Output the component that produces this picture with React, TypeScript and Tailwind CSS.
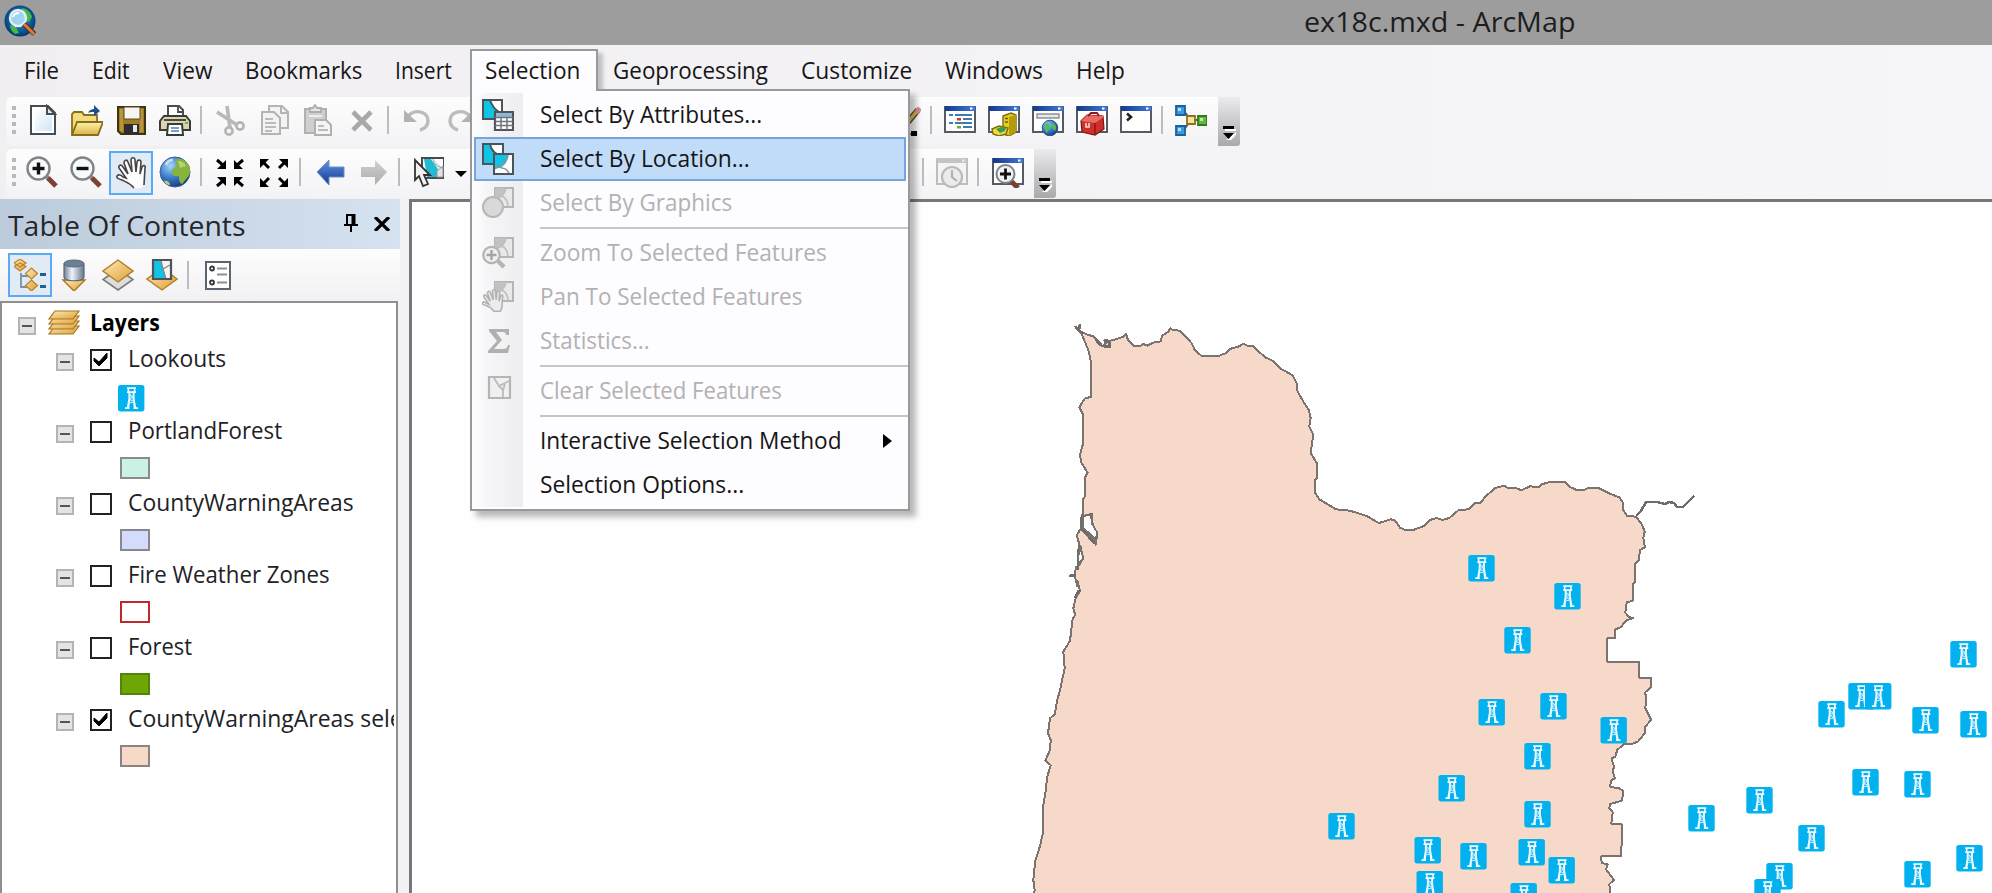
import { useLayoutEffect, useRef, useState, type ReactNode } from "react";

function Label({ w, children, className = "" }: { w: number; children: string; className?: string }) {
  const ref = useRef<HTMLSpanElement>(null);
  const [scale, setScale] = useState(1);
  useLayoutEffect(() => {
    if (ref.current) setScale(w / ref.current.offsetWidth);
  }, [w, children]);
  return (
    <span className={`block shrink-0 whitespace-nowrap ${className}`} style={{ width: w }}>
      <span ref={ref} className="inline-block origin-left" style={{ transform: `scaleX(${scale})` }}>
        {children}
      </span>
    </span>
  );
}

function Icon({ children, size = 32 }: { children: ReactNode; size?: number }) {
  return (
    <svg width={size} height={size} viewBox="0 0 32 32" fill="none" className="block shrink-0">
      {children}
    </svg>
  );
}

/* ---------- shared gradients ---------- */
function Defs() {
  return (
    <svg width="0" height="0" className="absolute">
      <defs>
        <linearGradient id="gold" x1="0" y1="0" x2="1" y2="1">
          <stop offset="0" stopColor="#fdebb8" />
          <stop offset="1" stopColor="#dd9f35" />
        </linearGradient>
        <linearGradient id="folder" x1="0" y1="0" x2="0" y2="1">
          <stop offset="0" stopColor="#fdf3a8" />
          <stop offset="1" stopColor="#d9b54a" />
        </linearGradient>
        <linearGradient id="steel" x1="0" y1="0" x2="1" y2="0">
          <stop offset="0" stopColor="#6f7f95" />
          <stop offset="0.4" stopColor="#eef4fb" />
          <stop offset="1" stopColor="#66758b" />
        </linearGradient>
        <linearGradient id="bluearrow" x1="0" y1="0" x2="0" y2="1">
          <stop offset="0" stopColor="#5f93e6" />
          <stop offset="1" stopColor="#12378f" />
        </linearGradient>
        <linearGradient id="grayarrow" x1="0" y1="0" x2="0" y2="1">
          <stop offset="0" stopColor="#d2d2d2" />
          <stop offset="1" stopColor="#ababab" />
        </linearGradient>
        <radialGradient id="ocean" cx="0.35" cy="0.3" r="0.75">
          <stop offset="0" stopColor="#a9d4f7" />
          <stop offset="0.5" stopColor="#3f80cd" />
          <stop offset="1" stopColor="#143a7c" />
        </radialGradient>
        <radialGradient id="deep" cx="0.5" cy="0.45" r="0.6">
          <stop offset="0" stopColor="#2ea0d8" />
          <stop offset="0.6" stopColor="#0d5c9c" />
          <stop offset="1" stopColor="#052c5e" />
        </radialGradient>
        <linearGradient id="page" x1="0" y1="0" x2="1" y2="1">
          <stop offset="0" stopColor="#ffffff" />
          <stop offset="1" stopColor="#cfe6f8" />
        </linearGradient>
        <linearGradient id="caption" x1="0" y1="0" x2="1" y2="0">
          <stop offset="0" stopColor="#16398c" />
          <stop offset="1" stopColor="#3f78d6" />
        </linearGradient>
        <g id="tower">
          <rect width="26.4" height="26.4" rx="2.6" fill="#03b1ef" />
          <path d="M9 2.2h9v1.8H9zM9 6.2h9v1.8H9zM9.6 4h1.6v2.2H9.6zM15.8 4h1.6v2.2h-1.6zM10.4 8h2v5.4l-1.300 10h-2.400l1.700-10zM14.6 8h2v5.400l1.700 10h-2.400l-1.300-10z" fill="#f2fbff" />
          <path d="M11.2 13l4.6 0M11 9l5 4M10.6 13.5l5.6 3.5M10.2 18l6.6-1" stroke="#c9eeff" strokeWidth="1.2" />
          <path d="M7 22.2h4.400v1.8H7zM15.600 22.2h4.400v1.8h-4.400z" fill="#f2fbff" />
        </g>
      </defs>
    </svg>
  );
}

/* ---------- icons ---------- */
const AppIcon = () => (
  <Icon>
    <circle cx="16" cy="16" r="15.5" fill="url(#deep)" />
    <path d="M18 3c6 1 9 5 10 9l-3 5-4-2 1-4-4-2zM6 20l6 2 3 6-4 1c-3-2-5-5-5-9z" fill="#45b649" />
    <circle cx="14" cy="13" r="8" fill="#a9dbf5" fillOpacity="0.92" stroke="#e6eef4" strokeWidth="2.4" />
    <path d="M9 12c1-3 4-4 6-4" stroke="#fff" strokeWidth="2" />
    <path d="M20 19l10.500 10" stroke="#5c2a10" strokeWidth="5" />
    <path d="M20 19l10 10" stroke="#d97a3c" strokeWidth="3" />
  </Icon>
);
const NewIcon = () => (
  <Icon>
    <path d="M4 2h17l7 7v21H4z" fill="#fff" stroke="#474b52" strokeWidth="2" />
    <path d="M8 6h11v6h6v15H8z" fill="url(#page)" />
    <path d="M20 2v8h8z" fill="#dfe5ec" stroke="#474b52" strokeWidth="2" />
  </Icon>
);
const OpenIcon = () => (
  <Icon>
    <path d="M1 30V10l2-2h8l2 3h13v7" fill="#f2dc7c" stroke="#8a6d1b" strokeWidth="1.8" />
    <path d="M1 31l5-13h26l-5 13z" fill="url(#folder)" stroke="#8a6d1b" strokeWidth="1.8" />
    <path d="M17 9c1-3 4-4 6-4V1l6 6-6 5V8c-3 0-5 0-6 1z" fill="#1f4f8f" />
  </Icon>
);
const SaveIcon = () => (
  <Icon>
    <path d="M3 3h27v27H6l-3-3z" fill="#a07c26" stroke="#3d3214" strokeWidth="2" />
    <path d="M5 5h3v22H5zM25 5h3v23h-3z" fill="#b8943c" />
    <path d="M9 3h16v12H9z" fill="#f5f5f2" stroke="#5b4c20" strokeWidth="1" />
    <path d="M9 20h15v10H9z" fill="#2d2d2d" />
    <path d="M18 21h4v7h-4z" fill="#e8e8e8" />
  </Icon>
);
const PrintIcon = () => (
  <Icon>
    <path d="M9 15V2h11l4 4v9" fill="#fff" stroke="#474b52" strokeWidth="2" />
    <path d="M19 2v6h6" stroke="#474b52" strokeWidth="1.800" />
    <path d="M5 12h22l4 5v9H1v-9z" fill="#d8d5b4" stroke="#3b3b36" strokeWidth="2" />
    <path d="M5 16h22" stroke="#4b4b44" strokeWidth="2" />
    <path d="M26 18h3v2h-3z" fill="#5ec038" />
    <path d="M9 20h14l1 11H8z" fill="#fff" stroke="#3b3b36" strokeWidth="2" />
    <path d="M12 24h8M12 27h8" stroke="#4a7fb8" strokeWidth="1.600" />
  </Icon>
);
const CutIcon = () => (
  <Icon>
    <path d="M3 8l20 13M13 2l3 22" stroke="#b9b9b9" strokeWidth="3.600" />
    <circle cx="15" cy="27" r="3.600" stroke="#b4b4b4" strokeWidth="2.600" />
    <circle cx="26" cy="22" r="3.600" stroke="#b4b4b4" strokeWidth="2.600" />
  </Icon>
);
const CopyIcon = () => (
  <Icon>
    <path d="M11 2h13l6 6v16H11z" fill="#f3f3f3" stroke="#b4b4b4" strokeWidth="2" />
    <path d="M23 2v7h7" stroke="#b4b4b4" strokeWidth="2" />
    <path d="M4 8h12l6 6v16H4z" fill="#f3f3f3" stroke="#b4b4b4" strokeWidth="2" />
    <path d="M7 15h8M7 19h11M7 23h11M7 27h7" stroke="#bbb" strokeWidth="1.800" />
  </Icon>
);
const PasteIcon = () => (
  <Icon>
    <path d="M3 5h21v24H3z" fill="#cfcfcf" stroke="#b0b0b0" strokeWidth="2" />
    <path d="M8 8V4h3l2-3 2 3h4v4z" fill="#e6e6e6" stroke="#adadad" strokeWidth="1.800" />
    <path d="M7 12h13" stroke="#eee" strokeWidth="2" />
    <path d="M13 16h11l5 5v10H13z" fill="#f5f5f5" stroke="#b0b0b0" strokeWidth="2" />
    <path d="M16 22h6M16 26h10" stroke="#bbb" strokeWidth="1.800" />
  </Icon>
);
const DeleteIcon = () => (
  <Icon>
    <path d="M7 8l18 18M25 8L7 26" stroke="#a8a8a8" strokeWidth="4.600" />
  </Icon>
);
const UndoIcon = () => (
  <Icon>
    <path d="M7 12c8-8 20-4 20 5 0 4-3 8-8 9" stroke="#bcbcbc" strokeWidth="3.400" />
    <path d="M3 6v12h13z" fill="#b2b2b2" />
  </Icon>
);
const RedoIcon = () => (
  <Icon>
    <path d="M25 12C17 4 5 8 5 17c0 4 3 8 8 9" stroke="#bcbcbc" strokeWidth="3.400" />
    <path d="M29 6v12H16z" fill="#b2b2b2" />
  </Icon>
);
const PencilIcon = () => (
  <Icon>
    <path d="M19 18L29 6" stroke="#5a4a2a" strokeWidth="6" />
    <path d="M19 18L28 7" stroke="#d8b65a" strokeWidth="3.500" />
    <path d="M27 9l4-5" stroke="#d98f8f" strokeWidth="5" />
    <path d="M22 27h6v6h-6z" fill="#000" />
    <path d="M17 30h5" stroke="#666" strokeWidth="1.500" />
  </Icon>
);

function WindowFrame({ gray = false }: { gray?: boolean }) {
  return (
    <>
      <path d="M1 3h30v25H1z" fill={gray ? "#f4f4f4" : "#fff"} stroke={gray ? "#bdbdbd" : "#565b63"} strokeWidth="2" />
      <path d="M1 2h30v5H1z" fill={gray ? "#c4c4c4" : "url(#caption)"} />
      <path d="M26 3.500h2.500v2H26z" fill={gray ? "#eee" : "#fff"} />
    </>
  );
}
const TocIcon = () => (
  <Icon>
    <WindowFrame />
    <path d="M5 10h4v2H5zM5 18h4v2H5z" fill="#3480c4" />
    <path d="M13 14h4v2.500h-4z" fill="#c93636" />
    <path d="M13 22h4v2.500h-4z" fill="#6fae2c" />
    <path d="M11 11h17M19 15h9M11 19h17M19 23h9" stroke="#3f7cad" strokeWidth="2" />
  </Icon>
);
const CatalogIcon = () => (
  <Icon>
    <WindowFrame />
    <path d="M15 12l8-3 5 2v17l-7 4-6-2z" fill="#e6cf1c" stroke="#7c6a0c" strokeWidth="1.400" />
    <path d="M21 13l7-2v17l-7 4z" fill="#b59b0e" />
    <path d="M17 14.500h3M17 18h3" stroke="#6a5a08" strokeWidth="1.600" />
    <path d="M4 25l7-3 9 2-2 6-7 2-6-2z" fill="#f0dd3c" stroke="#7c6a0c" strokeWidth="1.400" />
    <path d="M8 25l5-2 5 1-1 3-5 2z" fill="#3d9a5c" />
  </Icon>
);
const SearchIcon = () => (
  <Icon>
    <WindowFrame />
    <path d="M5 10h22v4H5z" fill="#e6e8ea" stroke="#8b9299" strokeWidth="1.400" />
    <circle cx="18" cy="24" r="7.800" fill="url(#ocean)" stroke="#2b5a86" strokeWidth="1" />
    <path d="M13 21c2-3 5-2 5 1s-2 4-3 7c-2-2-3-5-2-8zM20 19c4 1 5 5 3 8l-3-3z" fill="#55bd58" />
  </Icon>
);
const ToolboxIcon = () => (
  <Icon>
    <WindowFrame />
    <path d="M5 17l6-6 16 1 1 13-9 6-13-3z" fill="#cf2f2a" stroke="#7e1512" strokeWidth="1.200" />
    <path d="M5 17l14 2 9-6-1-1-16-1z" fill="#e96a60" />
    <path d="M19 19v12" stroke="#8f1916" strokeWidth="1.600" />
    <path d="M12 12l3-3h6l2 3" stroke="#8f1916" strokeWidth="1.800" />
    <path d="M10 19v4h3v-4" stroke="#f6d9d5" strokeWidth="1.600" />
  </Icon>
);
const PythonIcon = () => (
  <Icon>
    <WindowFrame />
    <path d="M7 9.500l4 3.500-4 3.500" stroke="#222" strokeWidth="2.600" />
  </Icon>
);
const ModelIcon = () => (
  <Icon>
    <path d="M9 7l6 8M9 26l6-9M18 16h6" stroke="#4b5664" strokeWidth="1.800" />
    <path d="M1 2h9v9H1zM1 22h9v9H1z" fill="#3c9be0" stroke="#1c5f9d" strokeWidth="1.800" />
    <path d="M3 4h3v3H3zM3 24h3v3H3z" fill="#b5e0fb" />
    <path d="M12 12h8v8h-8z" fill="#f7e39a" stroke="#8f6f1e" strokeWidth="1.800" />
    <path d="M23 12h9v9h-9z" fill="#63b83e" stroke="#2f7a1a" strokeWidth="1.800" />
    <path d="M25 14h3v3h-3z" fill="#bde8a5" />
  </Icon>
);

function Magnifier({ minus = false }: { minus?: boolean }) {
  return (
    <>
      <path d="M20 20l3 3" stroke="#8d8d8d" strokeWidth="4" />
      <path d="M22 22l8 8" stroke="#7c4130" strokeWidth="5" />
      <circle cx="12.500" cy="12.500" r="11" fill="#f7fafc" stroke="#808387" strokeWidth="2.400" />
      <path d="M6.500 12.500h12" stroke="#111" strokeWidth="3.400" />
      {!minus && <path d="M12.500 6.500v12" stroke="#111" strokeWidth="3.400" />}
    </>
  );
}
const ZoomInIcon = () => (
  <Icon>
    <Magnifier />
  </Icon>
);
const ZoomOutIcon = () => (
  <Icon>
    <Magnifier minus />
  </Icon>
);
const handPath =
  "M18 31C14 26 11 24 7 23 4 22 1 21 2 19c1-2 4-1 6 1l3 1L4 11c-1-3 2-4 4-1l5 7L9 6c0-3 3-4 4-1l4 10-1-12c0-3 4-3 4 0l1 12 1-10c1-3 4-2 4 0l-1 12 2-7c1-2 4-2 3 1l-1 15-2 5z";
const PanIcon = () => (
  <Icon>
    <path d={handPath} fill="#fdfdfd" />
    <path
      d="M19 31C15 26 11 25 7 23 4 22 1 21 2 19c1-2 4-1 6 1l3 1L4 11c-1-3 2-4 4-1l5 7L9 6c0-3 3-4 4-1l4 10-1-12c0-3 4-3 4 0l1 12 1-10c1-3 4-2 4 0l-1 12 2-7c1-2 4-2 3 1l-1 17"
      stroke="#454545"
      strokeWidth="1.600"
    />
  </Icon>
);
const GlobeIcon = () => (
  <Icon>
    <circle cx="16" cy="16" r="15" fill="url(#ocean)" stroke="#3c618f" strokeWidth="1" />
    <path d="M17 4c4-3 9 0 12 4s3 10-1 14l-5 6c-3-1-3-5-3-8-3 1-7 0-7-4s3-5 6-5c-2-2-3-5-2-7z" fill="#86b43c" />
    <path d="M19 5c4 0 7 2 8 5l-6 2zM5 25c3-1 6 1 6 4-3 0-5-2-6-4z" fill="#b5d172" />
    <path d="M7 9c1-3 4-5 7-5" stroke="#e6f4ff" strokeWidth="2.500" strokeOpacity="0.700" />
  </Icon>
);
const FixedInIcon = () => (
  <Icon>
    <path d="M3 4l7 6M29 4l-7 6M3 30l7-6M29 30l-7-6" stroke="#000" strokeWidth="3" />
    <path d="M12 4v9H3zM20 4v9h9zM12 30v-9H3zM20 30v-9h9z" fill="#000" />
  </Icon>
);
const FixedOutIcon = () => (
  <Icon>
    <path d="M4 5l7 7M28 5l-7 7M4 29l7-7M28 29l-7-7" stroke="#000" strokeWidth="3" />
    <path d="M2 3h9l-9 9zM30 3h-9l9 9zM2 31h9l-9-9zM30 31h-9l9-9z" fill="#000" />
  </Icon>
);
const BackIcon = () => (
  <Icon>
    <path d="M4 16L16 4v7h15v10H16v8z" fill="url(#bluearrow)" stroke="#6f8fc9" strokeWidth="1" />
  </Icon>
);
const ForwardIcon = () => (
  <Icon>
    <path d="M30 16L18 4v7H4v10h14v8z" fill="url(#grayarrow)" />
  </Icon>
);
const SelectIcon = () => (
  <Icon>
    <path d="M10 2h22v20H10z" fill="#fff" stroke="#4a4a4a" strokeWidth="2" />
    <path d="M12 3h7l7 10v8H15z" fill="#21bcd2" />
    <path d="M21 3c1 5 4 8 10 9M25 15l6-5v11h-6z" fill="#dfe3e5" stroke="#999" strokeWidth="1" />
    <path d="M3 4v20l4-4 4 10 5-2-4-9h6z" fill="#f2f2f2" stroke="#333" strokeWidth="1.800" />
  </Icon>
);
const TimeIcon = () => (
  <Icon>
    <WindowFrame gray />
    <circle cx="16" cy="21" r="10" fill="#ebebeb" stroke="#b9b9b9" strokeWidth="2.200" />
    <path d="M16 14v7l5 4" stroke="#b0b0b0" strokeWidth="2.200" />
  </Icon>
);
const ViewerIcon = () => (
  <Icon>
    <WindowFrame />
    <path d="M19 25l7 7" stroke="#7c4130" strokeWidth="5" />
    <circle cx="13.500" cy="18" r="9" fill="#eef2f4" stroke="#808387" strokeWidth="2" />
    <path d="M8 18h11M13.500 12.500v11" stroke="#111" strokeWidth="2.800" />
  </Icon>
);

/* menu icons */
const AttributesIcon = () => (
  <Icon>
    <path d="M1 1h19v19H1z" fill="#fff" />
    <path d="M1 1h7c2 6 5 10 12 14v5H1z" fill="#10c4e6" />
    <path d="M1 1h19v19H1zM8 1c2 6 4 9 9 12" stroke="#4d5358" strokeWidth="2" />
    <path d="M13 13h18v18H13z" fill="#fff" stroke="#50545a" strokeWidth="2.200" />
    <path d="M14 14h16v4H14z" fill="#8fb5d8" />
    <path d="M13 18.500h18M13 22.500h18M13 26.500h18M19 18v13M25 18v13" stroke="#70757c" strokeWidth="1.500" />
  </Icon>
);
const LocationIcon = () => (
  <Icon>
    <path d="M1 1h20v20H1z" fill="#fff" />
    <path d="M1 1h7c2 6 5 10 12 14v6H1z" fill="#10c4e6" />
    <path d="M1 1h20v20H1zM8 1c1 5 3 8 7 10" stroke="#4d5358" strokeWidth="2" />
    <path d="M12 11h19v20H12z" fill="#fff" />
    <path d="M12 11h14l-2 9-5 5h-7z" fill="#10c4e6" />
    <path d="M26 11c0 8-6 12-14 15M19 25c5 0 7 2 8 6" stroke="#8c9196" strokeWidth="1.600" />
    <path d="M12 11h19v20H12z" stroke="#4d5358" strokeWidth="2" />
  </Icon>
);
function GrayMap() {
  return (
    <>
      <path d="M13 1h18v19H13z" fill="#e9e9e9" stroke="#b5b5b5" strokeWidth="2" />
      <path d="M13 1h11c-1 6-5 9-11 11z" fill="#c2c2c2" />
      <path d="M24 1c-1 7-5 10-11 11M20 9c4 2 6 5 6 11" stroke="#bdbdbd" strokeWidth="1.600" />
    </>
  );
}
const GraphicsIcon = () => (
  <Icon>
    <GrayMap />
    <circle cx="11" cy="20" r="10" fill="#d9d9d9" stroke="#b7b7b7" strokeWidth="2" />
  </Icon>
);
const ZoomSelectedIcon = () => (
  <Icon>
    <GrayMap />
    <path d="M16 24l6 6" stroke="#b5b5b5" strokeWidth="4.500" />
    <circle cx="9.500" cy="18" r="8.200" fill="#efefef" stroke="#b4b4b4" strokeWidth="2.200" />
    <path d="M4.500 18h10M9.500 13v10" stroke="#a5a5a5" strokeWidth="2.400" />
  </Icon>
);
const PanSelectedIcon = () => (
  <Icon>
    <GrayMap />
    <g transform="translate(-1 8) scale(0.720)">
      <path d={handPath} fill="#ececec" stroke="#b2b2b2" strokeWidth="2.200" />
    </g>
  </Icon>
);
const SigmaIcon = () => (
  <Icon>
    <path d="M7 4h20v6h-3c0-2-1-3-3-3h-7l6 8-8 9h9c3 0 4-1 5-4h2l-2 8H6v-2l9-10-8-10z" fill="#b0b0b0" />
  </Icon>
);
const ClearIcon = () => (
  <Icon>
    <path d="M7 2h21v21H7z" fill="#f0f0f0" stroke="#b5b5b5" strokeWidth="2.200" />
    <path d="M12 3l5 8 10-5M17 11l4 4v7M21 15l2-6" stroke="#bbb" strokeWidth="1.800" />
  </Icon>
);

/* table of contents icons */
const DrawingOrderIcon = () => (
  <Icon>
    <path d="M7 14v14h8M7 17h8" stroke="#7d8fa3" strokeWidth="1.800" />
    <path d="M6 4l6 3.500-6 4.500-6-4.500zM6 0l6 4-6 4-6-4z" fill="url(#gold)" stroke="#bd832a" strokeWidth="1.200" />
    <path d="M17.500 9l6 5.500-6 5.500-6-5.500zM17.500 21l6 5.500-6 5.500-6-5.500z" fill="url(#gold)" stroke="#bd832a" strokeWidth="1.200" />
    <path d="M26 15.500h6M26 27.500h6" stroke="#20608f" strokeWidth="3.200" />
  </Icon>
);
const SourceIcon = () => (
  <Icon>
    <path d="M5 21h22L16 32z" fill="url(#gold)" stroke="#a8741f" strokeWidth="1.400" />
    <path d="M6 5v13c0 5 20 5 20 0V5z" fill="url(#steel)" stroke="#5a687c" strokeWidth="1.200" />
    <ellipse cx="16" cy="4.500" rx="10" ry="3.500" fill="#6d7f97" stroke="#5a687c" strokeWidth="1" />
  </Icon>
);
const VisibilityIcon = () => (
  <Icon>
    <path d="M16 10l15 10.500L16 31 1 20.500z" fill="#ddd" stroke="#7b7b7b" strokeWidth="1.600" />
    <path d="M16 1l15 11-15 11L1 12z" fill="url(#gold)" stroke="#b57d28" strokeWidth="1.400" />
  </Icon>
);
const BySelectionIcon = () => (
  <Icon>
    <path d="M16 9l15 11-15 11L1 20z" fill="url(#gold)" stroke="#b57d28" strokeWidth="1.400" />
    <path d="M7 1h18v19H7z" fill="#f5f5f5" />
    <path d="M7 1h8l2 9 3 10H7z" fill="#10c4e6" />
    <path d="M15 2l2 8 7-4M17 10l3 10" stroke="#888" strokeWidth="1.400" />
    <path d="M7 1h18v19H7z" stroke="#4d5358" strokeWidth="2.200" />
  </Icon>
);
const OptionsIcon = () => (
  <Icon>
    <path d="M4 3h24v27H4z" fill="#fff" stroke="#5b6470" strokeWidth="2" />
    <circle cx="10" cy="9.500" r="2" stroke="#2f363e" strokeWidth="1.800" />
    <circle cx="10" cy="23.500" r="2" stroke="#2f363e" strokeWidth="1.800" />
    <path d="M15 9.500h10M15 15.500h10M15 23.500h10" stroke="#8b8f94" strokeWidth="2" />
  </Icon>
);
const LayersIcon = () => (
  <Icon>
    {[20, 15, 10, 5].map((y) => (
      <path key={y} d={`M7 ${y - 2}h24l-6 8H1z`} fill="url(#gold)" stroke="#a8741f" strokeWidth="1.200" />
    ))}
  </Icon>
);

/* ---------- chrome ---------- */
const menuItems: [string, number][] = [
  ["File", 35],
  ["Edit", 38],
  ["View", 49],
  ["Bookmarks", 117],
  ["Insert", 57],
  ["Selection", 95],
  ["Geoprocessing", 155],
  ["Customize", 111],
  ["Windows", 98],
  ["Help", 49],
];

function MenuBar() {
  return (
    <nav className="flex h-[52px] items-center gap-[33px] bg-gradient-to-r from-[#f1eff1] to-[#f6f5f8] pb-[3px] pl-[24px] text-[#161616]">
      {menuItems.map(([name, w]) => (
        <div key={name} className="relative">
          {name === "Selection" && (
            <div className="absolute -left-[15px] -top-[5px] z-10 h-[47px] w-[128px] border-2 border-b-0 border-[#999] bg-[#fdfcfe] shadow-[5px_4px_4px_rgba(0,0,0,0.2)]" />
          )}
          <Label w={w} className="relative z-20">
            {name}
          </Label>
        </div>
      ))}
    </nav>
  );
}

function ToolButton({ children, active = false, className = "" }: { children: ReactNode; active?: boolean; className?: string }) {
  return (
    <div
      className={`flex h-11 w-11 shrink-0 items-center justify-center ${
        active ? "border-2 border-[#5aaaf8] bg-[#e1ebf5]" : ""
      } ${className}`}
    >
      {children}
    </div>
  );
}

const Separator = () => (
  <div className="flex h-7 w-[11px] shrink-0 pl-[3px]">
    <div className="h-full w-[2px] bg-[#bcbcbe]" />
  </div>
);

const Grip = () => (
  <div className="ml-[6px] mr-[5px] flex w-1 shrink-0 flex-col gap-1">
    {[0, 1, 2, 3].map((i) => (
      <div key={i} className="h-1 w-1 bg-[#b9b9bb]" />
    ))}
  </div>
);

const Overflow = () => (
  <div className="-mb-[3px] flex h-[49px] w-[22px] shrink-0 flex-col items-center justify-end rounded-br-[3px] bg-gradient-to-b from-[#ececee] to-[#a9a9ab] pb-[5px]">
    <svg width="14" height="15" viewBox="0 0 14 15">
      <path d="M3 3h11v2H3zM4 14l10-8v3l-5 5z" fill="#fff" />
      <path d="M1 0h11v3H1zM1 7h11l-5.500 6z" fill="#000" />
    </svg>
  </div>
);

function Toolbars() {
  return (
    <div className="flex h-[102px] shrink-0 flex-col items-start gap-[3px] bg-gradient-to-r from-[#f1eff1] to-[#f6f5f8] pl-[6px]">
      <div className="flex h-[49px] items-center rounded-l-md bg-gradient-to-b from-[#fdfdfe] to-[#f3f2f4] pb-[3px]">
        <Grip />
        <ToolButton><NewIcon /></ToolButton>
        <ToolButton><OpenIcon /></ToolButton>
        <ToolButton><SaveIcon /></ToolButton>
        <ToolButton><PrintIcon /></ToolButton>
        <Separator />
        <ToolButton><CutIcon /></ToolButton>
        <ToolButton><CopyIcon /></ToolButton>
        <ToolButton><PasteIcon /></ToolButton>
        <ToolButton><DeleteIcon /></ToolButton>
        <Separator />
        <ToolButton><UndoIcon /></ToolButton>
        <ToolButton><RedoIcon /></ToolButton>
        <div className="w-[400px] shrink-0" />
        <ToolButton><PencilIcon /></ToolButton>
        <Separator />
        <ToolButton><TocIcon /></ToolButton>
        <ToolButton><CatalogIcon /></ToolButton>
        <ToolButton><SearchIcon /></ToolButton>
        <ToolButton><ToolboxIcon /></ToolButton>
        <ToolButton><PythonIcon /></ToolButton>
        <Separator />
        <ToolButton><ModelIcon /></ToolButton>
        <div className="w-[5px]" />
        <Overflow />
      </div>
      <div className="flex h-[49px] items-center rounded-l-md bg-gradient-to-b from-[#fdfdfe] to-[#f3f2f4] pb-[3px]">
        <Grip />
        <ToolButton className="pr-[2px]"><ZoomInIcon /></ToolButton>
        <ToolButton className="pr-[2px]"><ZoomOutIcon /></ToolButton>
        <ToolButton active className="mt-[2px]"><PanIcon /></ToolButton>
        <ToolButton><GlobeIcon /></ToolButton>
        <Separator />
        <ToolButton><FixedInIcon /></ToolButton>
        <ToolButton><FixedOutIcon /></ToolButton>
        <Separator />
        <ToolButton><BackIcon /></ToolButton>
        <ToolButton><ForwardIcon /></ToolButton>
        <Separator />
        <ToolButton><SelectIcon /></ToolButton>
        <svg width="12" height="6" viewBox="0 0 12 6" className="ml-[5px] mt-[3px]">
          <path d="M0 0h12L6 6z" fill="#000" />
        </svg>
        <div className="w-[452px] shrink-0" />
        <Separator />
        <ToolButton><TimeIcon /></ToolButton>
        <Separator />
        <ToolButton className="ml-[1px]"><ViewerIcon /></ToolButton>
        <div className="w-[4px]" />
        <Overflow />
      </div>
    </div>
  );
}

type Row = { text: string; w: number; icon?: ReactNode; off?: boolean; hot?: boolean; sub?: boolean } | "sep";
const rows: Row[] = [
  { text: "Select By Attributes...", w: 222, icon: <AttributesIcon /> },
  { text: "Select By Location...", w: 210, icon: <LocationIcon />, hot: true },
  { text: "Select By Graphics", w: 192, icon: <GraphicsIcon />, off: true },
  "sep",
  { text: "Zoom To Selected Features", w: 287, icon: <ZoomSelectedIcon />, off: true },
  { text: "Pan To Selected Features", w: 262, icon: <PanSelectedIcon />, off: true },
  { text: "Statistics...", w: 110, icon: <SigmaIcon />, off: true },
  "sep",
  { text: "Clear Selected Features", w: 242, icon: <ClearIcon />, off: true },
  "sep",
  { text: "Interactive Selection Method", w: 302, sub: true },
  { text: "Selection Options...", w: 204 },
];

function SelectionMenu() {
  return (
    <div className="absolute left-[470px] top-[89px] z-10 w-[440px] border-2 border-[#999] bg-[#fdfcfe] pb-[2px] pl-[2px] pt-[2px] shadow-[6px_6px_6px_rgba(0,0,0,0.28)]">
      <div className="bg-[linear-gradient(to_right,#fdfcfe_2px,#f6f5f7_12px,#eeedf0_49px,#fdfcfe_49px)]">
        {rows.map((r, i) =>
          r === "sep" ? (
            <div key={i} className="flex h-[6px] items-center pl-[66px]">
              <div className="h-[2px] w-full bg-[#c6c5c8]" />
            </div>
          ) : (
            <div
              key={i}
              className={`mr-[2px] flex h-11 items-center border-2 pl-[6px] ${
                r.hot ? "border-[#76a4dc] bg-[#c0dcf9]" : "border-transparent"
              } ${r.off ? "text-[#b3b1b4]" : "text-[#161616]"}`}
            >
              <div className="mr-[26px] h-8 w-8 shrink-0">{r.icon}</div>
              <Label w={r.w} className="-mt-[2px]">{r.text}</Label>
              {r.sub && (
                <svg width="9" height="14" viewBox="0 0 9 16" preserveAspectRatio="none" className="ml-auto mr-[12px]">
                  <path d="M0 0l9 8-9 8z" fill="#000" />
                </svg>
              )}
            </div>
          ),
        )}
      </div>
      <div className="absolute -top-[2px] left-0 h-[2px] w-[124px] bg-[#fdfcfe]" />
    </div>
  );
}

const Expander = () => (
  <div className="flex h-[18px] w-[18px] shrink-0 items-center justify-center border-2 border-[#b4b4b4] bg-[#e4e4e4]">
    <div className="h-[2px] w-[10px] bg-[#555]" />
  </div>
);

const layers: { name: string; w: number; on?: boolean; swatch?: string }[] = [
  { name: "Lookouts", w: 98, on: true },
  { name: "PortlandForest", w: 154, swatch: "border-[#868e8a] bg-[#caf1e3]" },
  { name: "CountyWarningAreas", w: 226, swatch: "border-[#868790] bg-[#d5dcfb]" },
  { name: "Fire Weather Zones", w: 202, swatch: "border-[#c0292b] bg-white" },
  { name: "Forest", w: 64, swatch: "border-[#55820a] bg-[#6ea703]" },
  { name: "CountyWarningAreas selection", w: 328, on: true, swatch: "border-[#8b8480] bg-[#f6d9c7]" },
];

function TableOfContents() {
  return (
    <aside className="flex w-[400px] shrink-0 flex-col">
      <header className="flex h-[50px] shrink-0 items-center bg-gradient-to-r from-[#bccbdb] to-[#d5e3f0] pl-2 text-[28px] text-[#24262b]">
        <Label w={238} className="mt-[2px]">Table Of Contents</Label>
        <svg width="14" height="18" viewBox="0 0 14 18" className="ml-[98px] mb-[2px]">
          <path d="M3 1h8M3 0v11M0 11h14M7 11v7" stroke="#000" strokeWidth="2" />
          <path d="M9.500 0v11" stroke="#000" strokeWidth="4" />
        </svg>
        <svg width="18" height="14" viewBox="0 0 18 14" className="ml-[15px]">
          <path d="M2 0l14 14M16 0L2 14" stroke="#000" strokeWidth="3.200" />
        </svg>
      </header>
      <div className="flex h-[52px] shrink-0 items-center bg-gradient-to-b from-[#fdfdfe] to-[#f1f0f2] pl-2">
        <ToolButton active><DrawingOrderIcon /></ToolButton>
        <ToolButton><SourceIcon /></ToolButton>
        <ToolButton><VisibilityIcon /></ToolButton>
        <ToolButton><BySelectionIcon /></ToolButton>
        <Separator />
        <ToolButton className="ml-[1px]"><OptionsIcon /></ToolButton>
      </div>
      <div className="mr-[2px] flex-1 overflow-hidden border-2 border-b-0 border-[#8f8f91] bg-white pr-[2px] pt-[3px] text-[#222226]">
        <div className="flex h-9 items-center pl-4">
          <div className="mt-1"><Expander /></div>
          <div className="ml-3"><LayersIcon /></div>
          <Label w={70} className="-mt-[4px] ml-[10px] font-bold text-black">Layers</Label>
        </div>
        {layers.map((l) => (
          <div key={l.name}>
            <div className="flex h-9 items-center overflow-hidden pl-[54px]">
              <div className="mt-1"><Expander /></div>
              <div className="ml-4 flex h-[22px] w-[22px] shrink-0 items-center justify-center border-2 border-[#222] bg-white">
                {l.on && (
                  <svg width="16" height="16" viewBox="0 0 16 16">
                    <path d="M1 6l5 4 8-9v5l-8 8-5-5z" fill="#000" stroke="#000" strokeWidth="1" />
                  </svg>
                )}
              </div>
              <Label w={l.w} className="-mt-[5px] ml-[16px]">{l.name}</Label>
            </div>
            <div className="flex h-9 items-center pl-[118px]">
              {l.swatch ? (
                <div className={`h-[22px] w-[30px] border-2 ${l.swatch}`} />
              ) : (
                <svg width="27" height="27" viewBox="0 0 27 27" className="-ml-[2px] mt-1">
                  <use href="#tower" />
                </svg>
              )}
            </div>
          </div>
        ))}
      </div>
    </aside>
  );
}

/* ---------- map ---------- */
/** Boundary digitised in sheets: an origin in map pixels, vertices in thirds of a pixel. */
type Sheet = { x: number; y: number; pts: number[] };
const boundary: Sheet[] = [
  {
    x: 1020,
    y: 300,
    pts: [
      182, 95, 200, 103, 222, 110, 236, 133, 250, 138, 258, 128, 252, 120, 270, 122, 290, 117, 310, 110, 318, 101, 324, 120, 340, 137, 362, 137,
      370, 132, 382, 137, 400, 128, 422, 124, 426, 108, 446, 94, 450, 84, 458, 90, 480, 92, 500, 113, 515, 130, 524, 149, 544, 167, 598, 167, 616,
      160, 632, 146, 655, 140, 670, 131, 684, 138, 698, 138, 716, 155, 738, 173, 760, 183, 782, 206, 818, 226, 830, 250, 832, 272, 850, 305, 866,
      330, 872, 355, 868, 380, 880, 403, 872, 460, 890, 488, 890, 535, 884, 540, 884, 576, 898, 598, 948, 628, 990, 632, 1040, 648, 1076, 669,
      1094, 664, 1112, 658, 1126, 662, 1140, 683, 1156, 690, 1180, 690,
    ],
  },
  {
    x: 1380,
    y: 440,
    pts: [
      105, 268, 132, 258, 150, 240, 170, 234, 188, 240, 208, 234, 236, 210, 266, 208, 286, 188, 300, 190, 316, 170, 346, 144, 372, 137, 384, 144,
      408, 144, 424, 151, 450, 139, 476, 142, 486, 133, 512, 125, 554, 125, 572, 142, 590, 150, 612, 150, 624, 144, 656, 144, 690, 161, 718, 172,
      730, 190, 730, 210, 742, 228, 768, 230, 786, 254, 794, 275, 790, 295, 795, 322, 780, 330, 776, 362, 766, 370, 766, 425, 758, 432, 758, 482,
      740, 487, 736, 518, 748, 532, 760, 534, 738, 542, 722, 562, 706, 568, 706, 594, 681, 594, 681, 666, 777, 666, 777, 714, 813, 714, 813, 740,
      796, 757, 798, 778, 796, 805, 813, 838,
    ],
  },
  {
    x: 1300,
    y: 680,
    pts: [
      1053, 120, 1036, 140, 1034, 160, 1015, 184, 998, 191, 972, 192, 952, 210, 946, 230, 934, 236, 942, 260, 938, 275, 945, 295, 934, 300, 930,
      321, 958, 325, 970, 334, 966, 362, 930, 372, 928, 385, 938, 396, 934, 432, 966, 433, 964, 527, 903, 528, 905, 550, 924, 552, 918, 568, 942,
      600, 928, 612, 932, 650,
    ],
  },
  {
    x: 1020,
    y: 580,
    pts: [
      40, 950, 44, 930, 40, 900, 46, 842, 60, 798, 68, 762, 69, 680, 76, 642, 82, 590, 92, 555, 76, 542, 90, 510, 92, 480, 84, 460, 90, 415, 104,
      403, 112, 360, 122, 322, 128, 292, 134, 265, 130, 215, 150, 182, 158, 115, 166, 105, 160, 85, 168, 52, 180, 34, 172, 0,
    ],
  },
  {
    x: 1020,
    y: 300,
    pts: [
      172, 860, 164, 826, 168, 802, 178, 796, 190, 774, 180, 740, 170, 706, 182, 686, 218, 712, 228, 736, 231, 700, 218, 672, 214, 642, 188, 648,
      188, 600, 196, 588, 196, 530, 203, 518, 184, 488, 180, 466, 188, 434, 188, 342, 178, 322, 194, 296, 214, 290, 213, 186, 205, 150, 182, 95,
    ],
  },
];
const outline =
  "M" +
  boundary
    .flatMap((s) => {
      const out: string[] = [];
      for (let i = 0; i < s.pts.length; i += 2) {
        out.push(`${(s.x + s.pts[i] / 3).toFixed(1)} ${(s.y + s.pts[i + 1] / 3).toFixed(1)}`);
      }
      return out;
    })
    .join("L") +
  "Z";

const lookouts: [number, number][] = [
  [1468.300, 555], [1554.300, 583], [1504.300, 627], [1478.500, 699], [1540.300, 693], [1600.500, 717], [1524.300, 743], [1438.500, 775],
  [1328.300, 813], [1524.300, 801], [1414.500, 837], [1460.300, 843], [1518.500, 839], [1548.500, 857], [1416.500, 871], [1510.500, 883],
  [1950.300, 641], [1848.300, 683], [1865, 683], [1818.300, 701], [1912.300, 707], [1960.300, 711], [1852.300, 769], [1904.300, 771],
  [1746.300, 787], [1688.300, 805], [1798.300, 825], [1956.300, 845], [1904.300, 861], [1766.300, 863], [1754.300, 879],
];

function MapView() {
  return (
    <main className="min-w-0 flex-1 overflow-hidden border-l-[3px] border-t-[3px] border-[#77777a] bg-[#fefefe]">
      <svg width="1580" height="691" viewBox="412 202 1580 691" className="block">
        <path d={outline} fill="#f6d9c8" stroke="#7a736f" strokeWidth="2" strokeLinejoin="bevel" shapeRendering="crispEdges" />
        <path
          d="M1636 516l5-5 5-9h11l8 2 4-2 5 1 3 4h6l11-11M1075 326l6 7M1080 324l-1 6 4 4M1095 338l7 8 8 1-1-6-5 1M1082 514l-1 14 14 16M1093 514l-6 2M1079 545l-1 25M1069 576l7-1M1075 598l4-8"
          stroke="#706c6a"
          strokeWidth="2.600"
          fill="none"
          shapeRendering="crispEdges"
        />
        <path
          d="M1083 516l8-1 1 9 5 8-1 7-13-11zM1078 556l3-8 2 10-4 6z"
          fill="#fefefe"
          stroke="#77716e"
          strokeWidth="1.800"
          shapeRendering="crispEdges"
        />
        {lookouts.map(([x, y]) => (
          <use key={`${x}-${y}`} href="#tower" x={x} y={y} />
        ))}
      </svg>
    </main>
  );
}

export default function App() {
  return (
    <div className="relative flex h-[893px] w-[1992px] flex-col overflow-hidden bg-[#f2f1f3] font-['Open_Sans','Noto_Sans',sans-serif] text-[24px] leading-[32px]">
      <Defs />
      <header className="flex h-[45px] shrink-0 items-center bg-[#9d9d9d] pl-1 text-[27px] text-[#1d1d1d]">
        <div className="-mt-1"><AppIcon /></div>
        <Label w={271} className="ml-[1268px] -mt-[1px]">ex18c.mxd - ArcMap</Label>
      </header>
      <MenuBar />
      <Toolbars />
      <div className="flex min-h-0 flex-1">
        <TableOfContents />
        <div className="w-[9px] shrink-0 bg-[#f2f1f3]" />
        <MapView />
      </div>
      <SelectionMenu />
    </div>
  );
}
